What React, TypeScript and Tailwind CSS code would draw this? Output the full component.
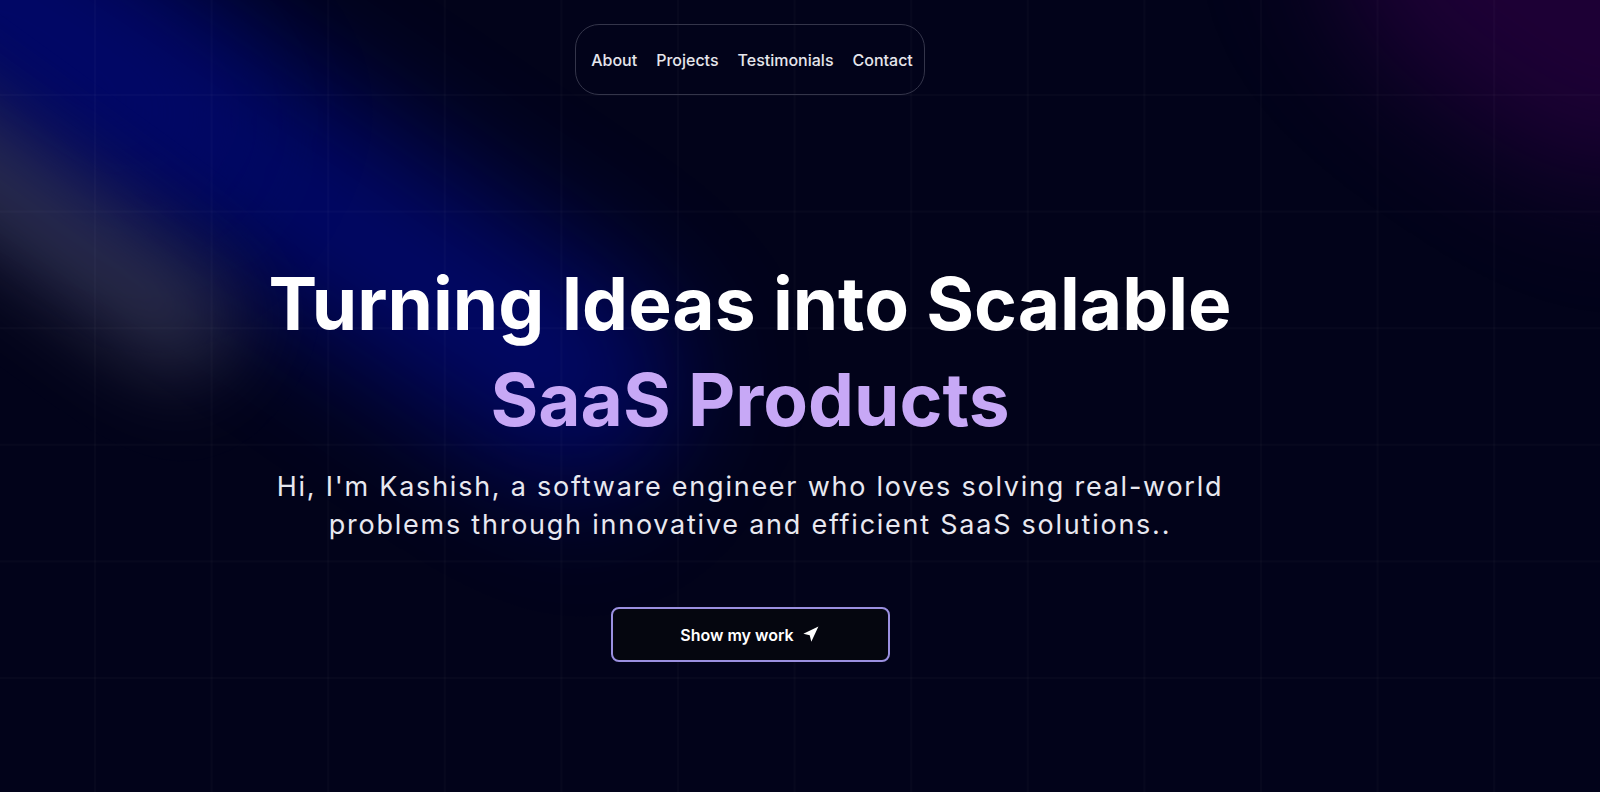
import { Fragment } from "react";

const links = ["About", "Projects", "Testimonials", "Contact"];

export default function App() {
  return (
    <div
      className="relative w-full h-[792px] overflow-hidden bg-[#02031a] text-white"
      style={{ fontFamily: "Inter, 'Noto Sans', sans-serif" }}
    >
      {/* glows */}
      <div className="pointer-events-none absolute inset-0">
        <div className="absolute left-[-300px] top-[40px] w-[1050px] h-[210px] rotate-[34deg] rounded-full bg-[#010a85] opacity-70 blur-[60px]" />
        <div className="absolute left-[-160px] top-[-40px] w-[420px] h-[200px] rotate-[34deg] rounded-full bg-[#01086a] opacity-60 blur-[60px]" />
        <div className="absolute left-[-230px] top-[150px] w-[500px] h-[110px] rotate-[36deg] rounded-full bg-[#4c4e68] opacity-55 blur-[40px]" />
        <div className="absolute right-[-200px] top-[-200px] w-[480px] h-[340px] rotate-[35deg] rounded-full bg-[#27003f] opacity-75 blur-[60px]" />
      </div>

      {/* grid */}
      <div className="pointer-events-none absolute inset-0 bg-[linear-gradient(to_right,rgba(255,255,255,0.02)_2px,transparent_2px),linear-gradient(to_bottom,rgba(255,255,255,0.02)_2px,transparent_2px)] bg-[size:116.6px_116.6px] bg-[position:94px_94px]" />

      <div className="relative w-[1500px] flex flex-col items-center">
        {/* nav */}
        <nav className="mt-[24px] h-[71px] flex items-center gap-[19px] pl-[15px] pr-[11px] rounded-[24px] border border-[#34354a]">
          {links.map((l) => (
            <Fragment key={l}>
              <a className="text-[16px] font-medium text-[#e6e6ec] cursor-pointer">{l}</a>
            </Fragment>
          ))}
        </nav>

        {/* hero */}
        <h1 className="mt-[161px] text-center text-[73px] leading-[96px] font-bold">
          <span className="block text-white">Turning Ideas into Scalable</span>
          <span className="block text-[#c7a8f6]">SaaS Products</span>
        </h1>

        <p className="mt-[20px] w-[1100px] text-center text-[27px] leading-[38px] tracking-[0.065em] text-[#e8e8f0]">
          Hi, I&apos;m Kashish, a software engineer who loves solving real-world
          <br />
          problems through innovative and efficient SaaS solutions..
        </p>

        <button className="mt-[63px] w-[279px] h-[55px] flex items-center justify-center gap-[7px] rounded-[8px] border-2 border-[#9b90e0] bg-[#05060f] text-[16px] font-semibold text-white">
          Show my work
          <svg width="19" height="19" viewBox="0 0 24 24" fill="white">
            <polygon points="3 11 22 2 13 21 11 13 3 11" />
          </svg>
        </button>
      </div>
    </div>
  );
}
